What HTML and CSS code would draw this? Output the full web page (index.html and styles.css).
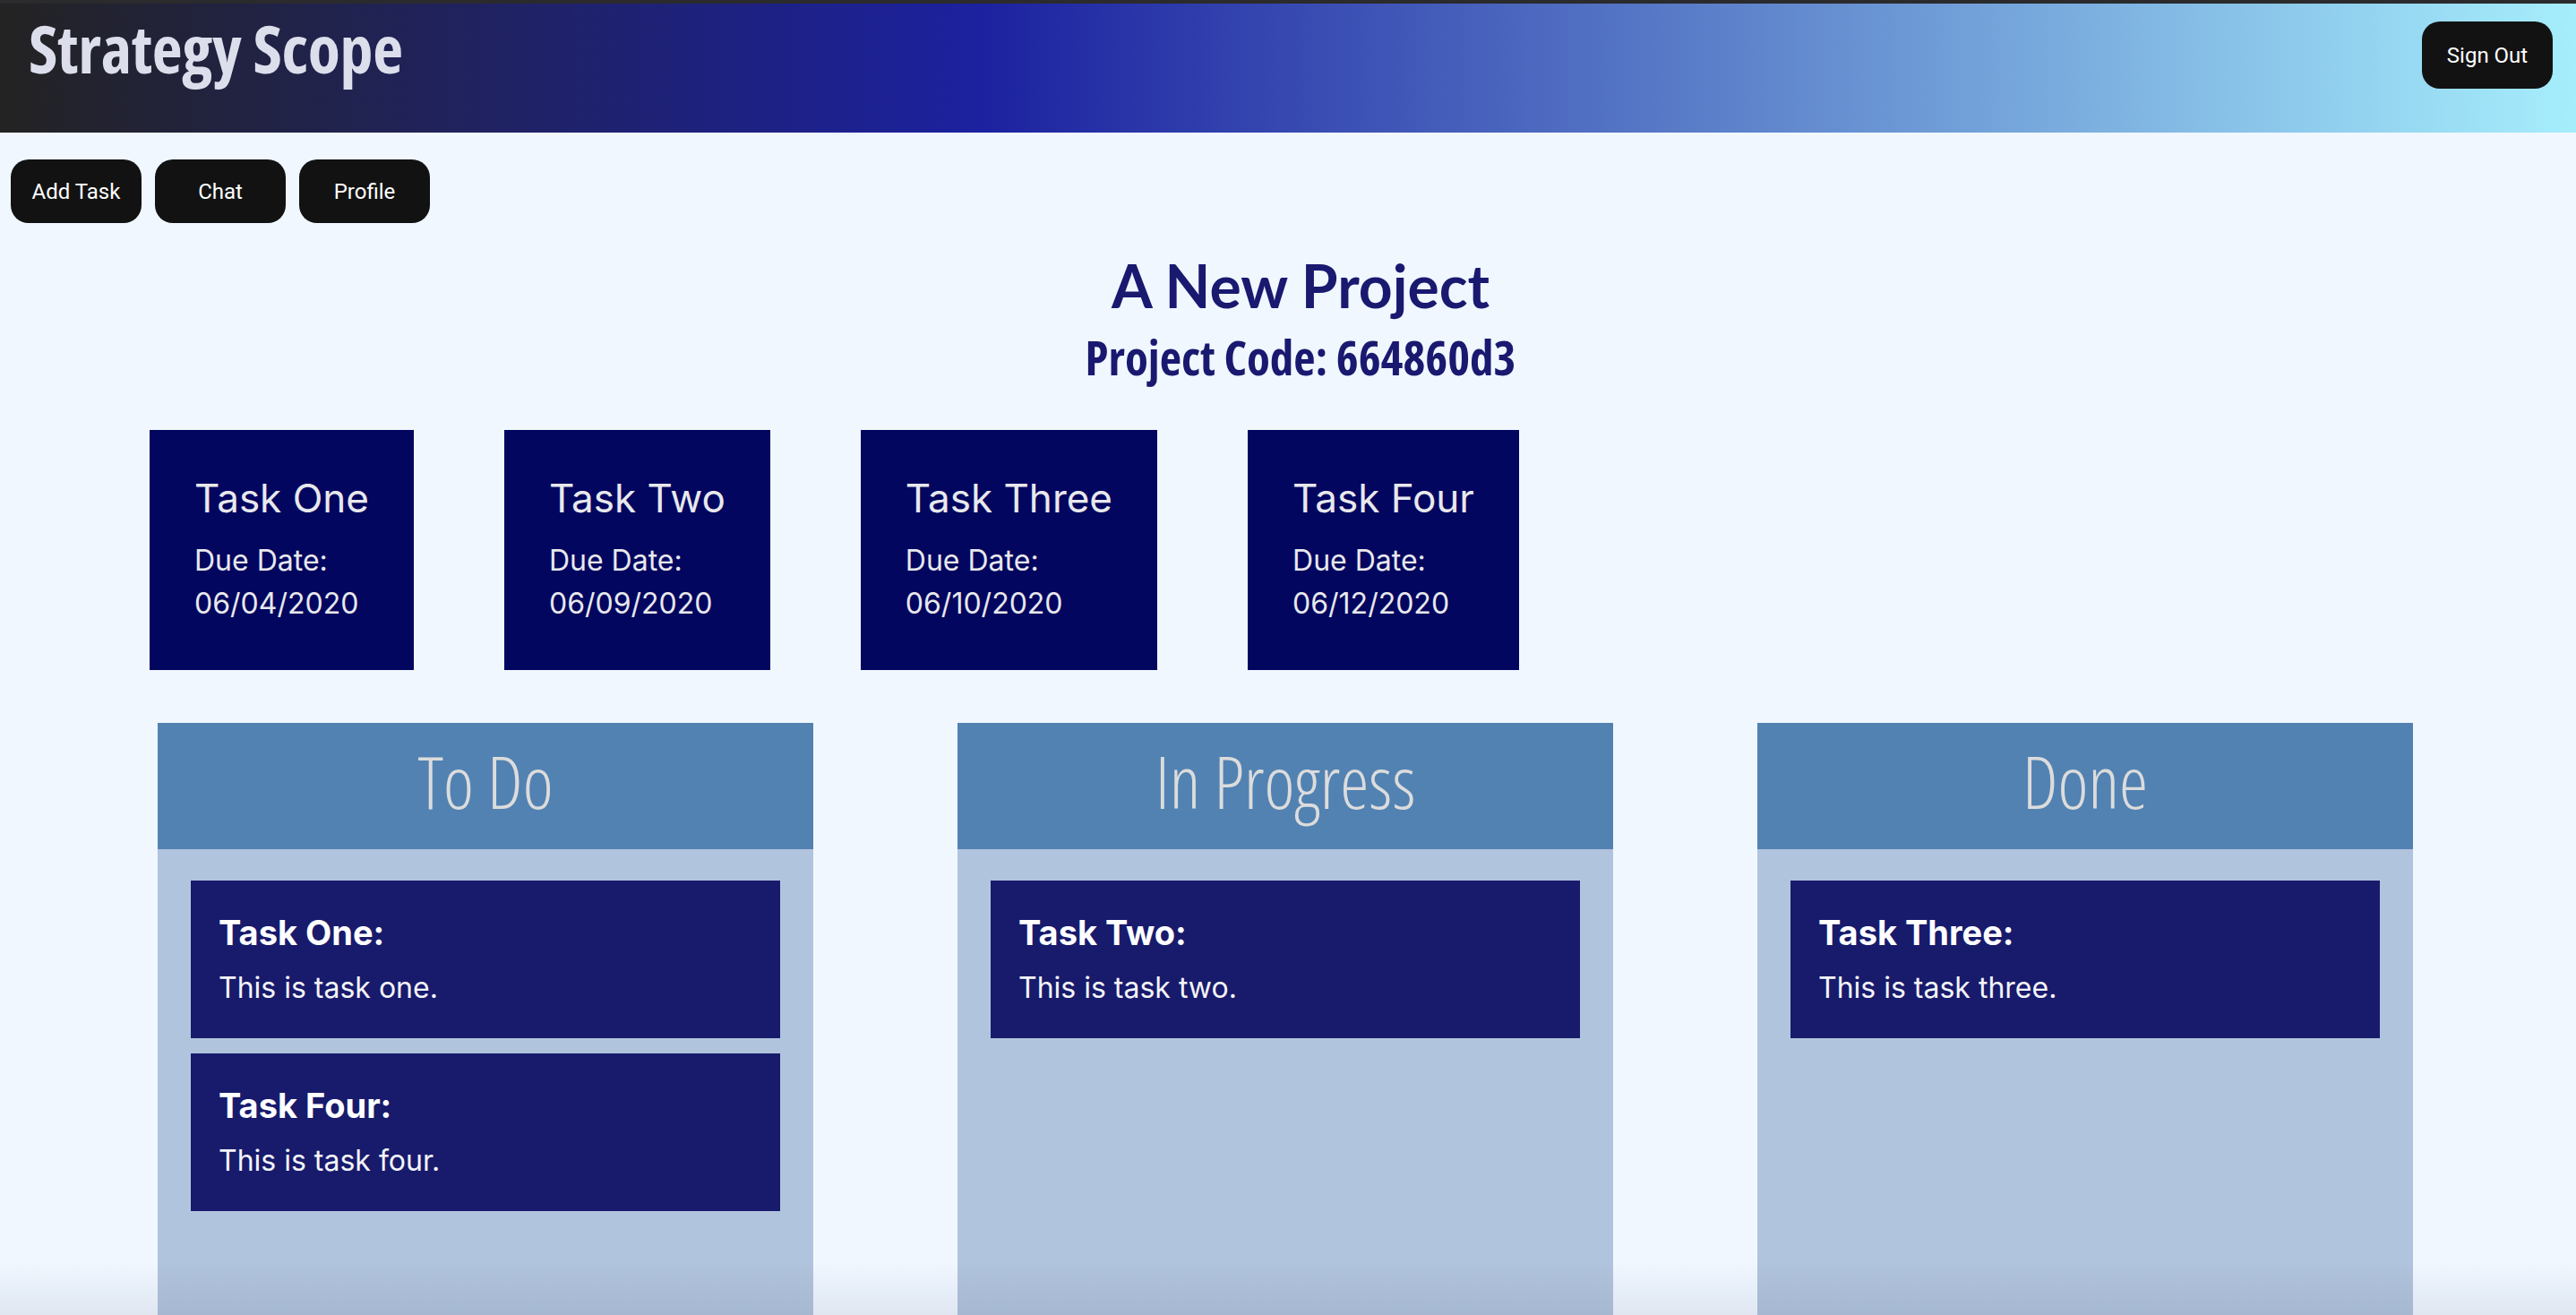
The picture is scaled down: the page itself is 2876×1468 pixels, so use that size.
FILE: index.html
```html
<!DOCTYPE html>
<html lang="en">
<head>
<meta charset="utf-8">
<title>Strategy Scope</title>
<link rel="stylesheet" href="styles.css">
</head>
<body>
<header class="topbar">
  <h1 class="brand">Strategy Scope</h1>
  <button class="btn btn-signout">Sign Out</button>
</header>
<main class="page">
  <nav class="actions">
    <button class="btn">Add Task</button>
    <button class="btn">Chat</button>
    <button class="btn">Profile</button>
  </nav>
  <section class="project">
    <h2 class="project-title">A New Project</h2>
    <h3 class="project-code">Project Code: 664860d3</h3>
  </section>
  <section class="deadlines">
    <div class="deadline">
      <h4 class="deadline-name">Task One</h4>
      <p class="deadline-date">Due Date:<br>06/04/2020</p>
    </div>
    <div class="deadline">
      <h4 class="deadline-name">Task Two</h4>
      <p class="deadline-date">Due Date:<br>06/09/2020</p>
    </div>
    <div class="deadline">
      <h4 class="deadline-name">Task Three</h4>
      <p class="deadline-date">Due Date:<br>06/10/2020</p>
    </div>
    <div class="deadline">
      <h4 class="deadline-name">Task Four</h4>
      <p class="deadline-date">Due Date:<br>06/12/2020</p>
    </div>
  </section>
  <section class="board">
    <div class="column">
      <div class="column-head">To Do</div>
      <div class="column-body">
        <div class="task"><h5 class="task-name">Task One:</h5><p class="task-desc">This is task one.</p></div>
        <div class="task"><h5 class="task-name">Task Four:</h5><p class="task-desc">This is task four.</p></div>
      </div>
    </div>
    <div class="column">
      <div class="column-head">In Progress</div>
      <div class="column-body">
        <div class="task"><h5 class="task-name">Task Two:</h5><p class="task-desc">This is task two.</p></div>
      </div>
    </div>
    <div class="column">
      <div class="column-head">Done</div>
      <div class="column-body">
        <div class="task"><h5 class="task-name">Task Three:</h5><p class="task-desc">This is task three.</p></div>
      </div>
    </div>
  </section>
</main>
<div class="window-shade"></div>
</body>
</html>
```
FILE: styles.css
```css
* { box-sizing: border-box; }

html, body {
  margin: 0;
  padding: 0;
}

body {
  background: #f0f7ff;
  font-family: Inter, "Noto Sans", sans-serif;
  overflow: hidden;
}

.topbar {
  height: 148px;
  border-top: 4px solid #2b2b2d;
  background: linear-gradient(to right, #232323 0%, #1c219f 38%, #a6eefc 100%);
  display: flex;
  justify-content: space-between;
  align-items: flex-start;
  padding: 0 26px 0 32px;
}

.brand {
  margin: 13px 0 0 0;
  font-family: "Open Sans", sans-serif;
  font-stretch: 75%;
  font-weight: 700;
  font-size: 74px;
  line-height: 74px;
  color: #dcdfeb;
  letter-spacing: -0.3px;
}

.btn {
  width: 146px;
  height: 71px;
  border: none;
  border-radius: 20px;
  background: #121212;
  color: #ffffff;
  font-family: Roboto, "Liberation Sans", sans-serif;
  font-size: 24px;
  padding: 0;
}

.btn-signout {
  margin-top: 20px;
  height: 75px;
}

.actions {
  display: flex;
  gap: 15px;
  padding: 30px 0 0 12px;
}

.project {
  text-align: center;
  color: #191970;
  padding-left: 28px;
}

.project-title {
  margin: 30px 0 0 0;
  font-family: Lato, sans-serif;
  font-weight: 700;
  font-size: 66px;
  line-height: 79px;
}

.project-code {
  margin: 9px 0 0 0;
  font-family: "Open Sans", sans-serif;
  font-stretch: 75%;
  font-weight: 700;
  font-size: 53px;
  line-height: 64px;
}

.deadlines {
  display: flex;
  gap: 101px;
  padding-left: 167px;
  margin-top: 49px;
}

.deadline {
  background: #02065f;
  color: #e8e8ec;
  padding: 50px 50px;
}

.deadline-name {
  margin: 0 0 19px 0;
  font-weight: 400;
  font-size: 44px;
  line-height: 53px;
  white-space: nowrap;
}

.deadline-date {
  margin: 0;
  font-size: 32px;
  line-height: 48px;
  white-space: nowrap;
}

.board {
  display: flex;
  justify-content: center;
  gap: 161px;
  margin-top: 59px;
  padding-right: 6px;
}

.column {
  width: 732px;
}

.column-head {
  height: 141px;
  background: #5282b2;
  color: #dcdcdc;
  display: flex;
  align-items: center;
  justify-content: center;
  font-family: "Open Sans", sans-serif;
  font-stretch: 75%;
  font-weight: 350;
  font-size: 81px;
  line-height: 1;
  padding-bottom: 12px;
}

.column-body {
  background: #b1c4dd;
  min-height: 600px;
  padding: 35px 37px;
  display: flex;
  flex-direction: column;
  gap: 17px;
}

.task {
  background: #181b6c;
  color: #ffffff;
  padding: 35px 31px 32px;
}

.task-name {
  margin: 0 0 15px 0;
  font-weight: 700;
  font-size: 38px;
  line-height: 46px;
}

.task-desc {
  margin: 0;
  font-size: 32px;
  line-height: 48px;
  color: #f4f4f8;
}

.window-shade {
  position: fixed;
  left: 0;
  right: 0;
  bottom: 0;
  height: 60px;
  background: linear-gradient(to bottom, rgba(40, 50, 80, 0), rgba(40, 50, 80, 0.08));
  pointer-events: none;
}
```
